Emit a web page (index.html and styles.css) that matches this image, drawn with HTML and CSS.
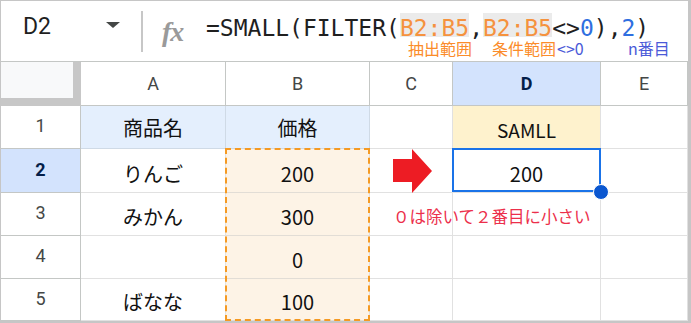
FILE: index.html
```html
<!DOCTYPE html>
<html lang="ja">
<head>
<meta charset="utf-8">
<title>SMALL FILTER</title>
<link rel="stylesheet" href="styles.css">
</head>
<body>
<div class="frame">
  <div class="fbar">
    <div class="namebox"><span class="name">D2</span><span class="caret"></span></div>
    <div class="divider"></div>
    <div class="fx">fx</div>
    <div class="formula">
      <div class="fline">=SMALL(FILTER(<span class="ref">B2:B5</span>,<span class="ref">B2:B5</span>&lt;&gt;<span class="num">0</span>),<span class="num">2</span>)</div>
      <div class="labels"><span class="lab l1">抽出範囲</span><span class="lab l2">条件範囲</span><span class="lab l3">&lt;&gt;0</span><span class="lab l4">n番目</span></div>
    </div>
  </div>
  <div class="sheet">
    <div class="corner"></div>
    <div class="c h">A</div>
    <div class="c h">B</div>
    <div class="c h">C</div>
    <div class="c h active">D</div>
    <div class="c h">E</div>

    <div class="c rh">1</div>
    <div class="c hdr1 blue">商品名</div>
    <div class="c hdr1 blue">価格</div>
    <div class="c"></div>
    <div class="c hdr1 yellow small">SAMLL</div>
    <div class="c"></div>

    <div class="c rh active">2</div>
    <div class="c">りんご</div>
    <div class="c rng">200</div>
    <div class="c arrowcell">
      <svg class="arrow" width="40" height="45" viewBox="0 0 40 45"><polygon points="0,10 19,10 19,0 39,22 19,44 19,33 0,33" fill="#ed1c24"/></svg>
    </div>
    <div class="c">200</div>
    <div class="c"></div>

    <div class="c rh">3</div>
    <div class="c">みかん</div>
    <div class="c rng">300</div>
    <div class="c note"><span>０は除いて２番目に小さい</span></div>
    <div class="c"></div>
    <div class="c"></div>

    <div class="c rh">4</div>
    <div class="c"></div>
    <div class="c rng">0</div>
    <div class="c"></div>
    <div class="c"></div>
    <div class="c"></div>

    <div class="c rh">5</div>
    <div class="c">ばなな</div>
    <div class="c rng">100</div>
    <div class="c"></div>
    <div class="c"></div>
    <div class="c"></div>

    <div class="range"></div>
    <div class="sel"></div>
  </div>
</div>
</body>
</html>
```
FILE: styles.css
```css
html, body {
  margin: 0;
  padding: 0;
  background: #ffffff;
}
.frame {
  box-sizing: border-box;
  width: 691px;
  height: 323px;
  border-style: solid;
  border-color: #c6c6c6;
  border-width: 1px 3px 2px 1px;
  overflow: hidden;
  background: #ffffff;
}
.fbar {
  box-sizing: border-box;
  height: 61px;
  border-bottom: 1px solid #c4c7c5;
  display: flex;
  align-items: flex-start;
}
.namebox {
  box-sizing: border-box;
  width: 140px;
  padding: 13px 21px 0 22px;
  display: flex;
  align-items: flex-start;
}
.name {
  flex: 1;
  font-family: Roboto, "Liberation Sans", sans-serif;
  font-size: 23px;
  line-height: 26px;
  color: #1f1f1f;
}
.caret {
  width: 0;
  height: 0;
  margin-top: 8px;
  border-left: 7.5px solid transparent;
  border-right: 7.5px solid transparent;
  border-top: 6px solid #444746;
}
.divider {
  width: 2px;
  height: 41px;
  margin-top: 10px;
  background: #c7c7c7;
}
.fx {
  width: 28px;
  margin-left: 19px;
  margin-top: 18px;
  font-family: "Liberation Serif", serif;
  font-style: italic;
  font-weight: bold;
  font-size: 28px;
  line-height: 26px;
  color: #9a9a9a;
  letter-spacing: -1px;
}
.formula {
  margin-left: 16px;
  padding-top: 12px;
}
.fline {
  font-family: "DejaVu Sans Mono", "Liberation Mono", monospace;
  font-size: 23px;
  line-height: 26px;
  height: 26px;
  white-space: pre;
  color: #1f1f1f;
}
.ref {
  display: inline-block;
  line-height: 18px;
  padding-top: 6px;
  color: #f5923e;
  background: #ebebeb;
}
.num {
  display: inline-block;
  line-height: 18px;
  color: #2f6fe0;
}
.labels {
  display: flex;
  margin-top: 1px;
  font-family: "Noto Sans CJK JP", sans-serif;
  font-size: 16px;
  line-height: 17px;
  white-space: nowrap;
}
.lab { display: block; }
.l1 { margin-left: 202px; width: 84px; color: #fb8c2a; }
.l2 { width: 65px; color: #fb8c2a; }
.l3 { width: 71px; color: #4b5ad8; }
.l4 { color: #4b5ad8; }

.sheet {
  position: relative;
  display: grid;
  grid-template-columns: 80px 145px 144px 83px 148px 87px;
  grid-template-rows: 44px 43px 44px 43px 43px 42px;
}
.corner {
  box-sizing: border-box;
  background: #f8f9fa;
  border-right: 8px solid #c7c7c7;
  border-bottom: 8px solid #c7c7c7;
}
.c {
  box-sizing: border-box;
  border-right: 1px solid #e1e1e1;
  border-bottom: 1px solid #e1e1e1;
  display: flex;
  justify-content: center;
  align-items: flex-end;
  padding-bottom: 6px;
  font-family: "Noto Sans CJK JP", sans-serif;
  font-size: 20px;
  line-height: 24px;
  color: #111111;
  white-space: nowrap;
}
.h, .rh {
  border-color: #c4c7c5;
  align-items: center;
  padding: 0;
  font-family: Roboto, "Liberation Sans", sans-serif;
  font-size: 18px;
  color: #444746;
}
.rh { padding-bottom: 2px; }
.active {
  background: #d3e3fd;
  color: #041e49;
  font-weight: bold;
}
.hdr1 { padding-bottom: 8px; }
.blue {
  background: #e4effd;
  border-bottom-color: #cfdae6;
  border-right-color: #cfdae6;
}
.yellow {
  background: #fef2cd;
  border-bottom-color: #e6e0cf;
}
.small {
  font-size: 19px;
  padding-bottom: 6px;
}
.rng {
  background: #fdf3e6;
  border-bottom-color: #e2ddd6;
}
.arrowcell {
  justify-content: flex-start;
  align-items: flex-start;
  padding: 0 0 0 23px;
}
.arrow {
  display: block;
  overflow: visible;
}
.note {
  justify-content: flex-start;
  align-items: flex-start;
  padding: 13px 0 0 23px;
  overflow: visible;
  font-size: 16.5px;
  line-height: 20px;
  color: #ec2f4b;
  position: relative;
  z-index: 1;
}
.range {
  position: absolute;
  grid-column: 3 / 4;
  grid-row: 3 / 7;
  top: -1px;
  left: -1px;
  right: 0;
  bottom: 0;
  border: 2px dashed #f59a23;
  pointer-events: none;
}
.sel {
  position: absolute;
  grid-column: 5 / 6;
  grid-row: 3 / 4;
  top: -1px;
  left: -1px;
  right: 0;
  bottom: 1px;
  border: 2px solid #1a73e8;
}
.sel::after {
  content: "";
  position: absolute;
  right: -10px;
  bottom: -10px;
  width: 14px;
  height: 14px;
  border-radius: 50%;
  background: #0b57d0;
  border: 1px solid #ffffff;
}
```
